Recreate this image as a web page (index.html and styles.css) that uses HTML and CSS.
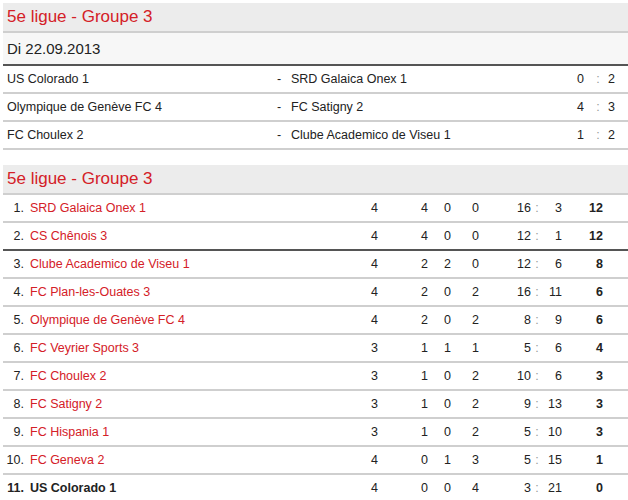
FILE: index.html
```html
<!DOCTYPE html>
<html lang="de">
<head>
    <meta charset="utf-8">
    <meta name="viewport" content="width=device-width">
    <title>5e ligue - Groupe 3</title>
    <link rel="stylesheet" href="styles.css">
</head>
<body>
    <div id="page">
        <div class="block">
            <h2 class="block-title">5e ligue - Groupe 3</h2>
            <div class="match-date">Di 22.09.2013</div>
            <div class="match">
                <span class="home">US Colorado 1</span>
                <span class="dash">-</span>
                <span class="away">SRD Galaica Onex 1</span>
                <span class="goals-home">0</span>
                <span class="colon">:</span>
                <span class="goals-away">2</span>
            </div>
            <div class="match">
                <span class="home">Olympique de Genève FC 4</span>
                <span class="dash">-</span>
                <span class="away">FC Satigny 2</span>
                <span class="goals-home">4</span>
                <span class="colon">:</span>
                <span class="goals-away">3</span>
            </div>
            <div class="match">
                <span class="home">FC Choulex 2</span>
                <span class="dash">-</span>
                <span class="away">Clube Academico de Viseu 1</span>
                <span class="goals-home">1</span>
                <span class="colon">:</span>
                <span class="goals-away">2</span>
            </div>
        </div>

        <div class="block">
            <h2 class="block-title">5e ligue - Groupe 3</h2>
            <table class="ranking">
                <colgroup>
                    <col class="c-rank">
                    <col class="c-team">
                    <col class="c-games">
                    <col class="c-won">
                    <col class="c-drawn">
                    <col class="c-lost">
                    <col class="c-gf">
                    <col class="c-colon">
                    <col class="c-ga">
                    <col class="c-pts">
                    <col class="c-rest">
                </colgroup>
                <tbody>
                    <tr><td class="rank">1.</td><td class="team"><a href="#">SRD Galaica Onex 1</a></td><td>4</td><td>4</td><td>0</td><td>0</td><td>16</td><td class="sep">:</td><td>3</td><td class="pts">12</td><td></td></tr>
                    <tr class="promo"><td class="rank">2.</td><td class="team"><a href="#">CS Chênois 3</a></td><td>4</td><td>4</td><td>0</td><td>0</td><td>12</td><td class="sep">:</td><td>1</td><td class="pts">12</td><td></td></tr>
                    <tr><td class="rank">3.</td><td class="team"><a href="#">Clube Academico de Viseu 1</a></td><td>4</td><td>2</td><td>2</td><td>0</td><td>12</td><td class="sep">:</td><td>6</td><td class="pts">8</td><td></td></tr>
                    <tr><td class="rank">4.</td><td class="team"><a href="#">FC Plan-les-Ouates 3</a></td><td>4</td><td>2</td><td>0</td><td>2</td><td>16</td><td class="sep">:</td><td>11</td><td class="pts">6</td><td></td></tr>
                    <tr><td class="rank">5.</td><td class="team"><a href="#">Olympique de Genève FC 4</a></td><td>4</td><td>2</td><td>0</td><td>2</td><td>8</td><td class="sep">:</td><td>9</td><td class="pts">6</td><td></td></tr>
                    <tr><td class="rank">6.</td><td class="team"><a href="#">FC Veyrier Sports 3</a></td><td>3</td><td>1</td><td>1</td><td>1</td><td>5</td><td class="sep">:</td><td>6</td><td class="pts">4</td><td></td></tr>
                    <tr><td class="rank">7.</td><td class="team"><a href="#">FC Choulex 2</a></td><td>3</td><td>1</td><td>0</td><td>2</td><td>10</td><td class="sep">:</td><td>6</td><td class="pts">3</td><td></td></tr>
                    <tr><td class="rank">8.</td><td class="team"><a href="#">FC Satigny 2</a></td><td>3</td><td>1</td><td>0</td><td>2</td><td>9</td><td class="sep">:</td><td>13</td><td class="pts">3</td><td></td></tr>
                    <tr><td class="rank">9.</td><td class="team"><a href="#">FC Hispania 1</a></td><td>3</td><td>1</td><td>0</td><td>2</td><td>5</td><td class="sep">:</td><td>10</td><td class="pts">3</td><td></td></tr>
                    <tr><td class="rank">10.</td><td class="team"><a href="#">FC Geneva 2</a></td><td>4</td><td>0</td><td>1</td><td>3</td><td>5</td><td class="sep">:</td><td>15</td><td class="pts">1</td><td></td></tr>
                    <tr class="own"><td class="rank">11.</td><td class="team">US Colorado 1</td><td>4</td><td>0</td><td>0</td><td>4</td><td>3</td><td class="sep">:</td><td>21</td><td class="pts">0</td><td></td></tr>
                </tbody>
            </table>
        </div>
    </div>
</body>
</html>
```

FILE: styles.css
```css
body {
    margin: 0;
    font-family: "Liberation Sans", Arial, sans-serif;
    font-size: 12.5px;
    color: #222;
    background: #fff;
}

#page {
    padding: 3px 0 0 3px;
}

.block {
    margin-bottom: 15px;
}

.block-title {
    margin: 0;
    height: 28px;
    line-height: 28px;
    padding-left: 4px;
    background-color: #ececec;
    border-bottom: 2px solid #cfcfcf;
    color: #d42027;
    font-size: 17px;
    font-weight: normal;
}

.match-date {
    height: 31px;
    line-height: 31px;
    padding-left: 4px;
    background-color: #f7f7f7;
    border-bottom: 2px solid #555;
    font-size: 15px;
}

.match {
    display: grid;
    grid-template-columns: 269px 14px 269px 35px 16px 1fr;
    height: 26px;
    line-height: 26px;
    border-bottom: 2px solid #cfcfcf;
}

.match .home {
    padding-left: 4px;
}

.match .dash {
    text-align: center;
}

.match .away {
    padding-left: 5px;
}

.match .goals-home {
    text-align: right;
    padding-right: 6px;
}

.match .colon {
    text-align: center;
    color: #999;
}

.match .goals-away {
    padding-left: 2px;
}

.ranking {
    width: 625px;
    border-collapse: collapse;
    table-layout: fixed;
}

.c-rank { width: 24px; }
.c-team { width: 313px; }
.c-games { width: 38px; }
.c-won { width: 50px; }
.c-drawn { width: 23px; }
.c-lost { width: 28px; }
.c-gf { width: 52px; }
.c-colon { width: 12px; }
.c-ga { width: 19px; }
.c-pts { width: 41px; }
.c-rest { width: 25px; }

.ranking td {
    height: 26px;
    padding: 0;
    text-align: right;
    border-bottom: 2px solid #cfcfcf;
    white-space: nowrap;
}

.ranking td.rank {
    padding-right: 3px;
}

.ranking td.team {
    text-align: left;
    padding-left: 3px;
}

.ranking td.sep {
    text-align: center;
    color: #999;
}

.ranking td.pts {
    font-weight: bold;
}

.ranking a {
    color: #d42027;
    text-decoration: none;
}

.ranking tr.promo td {
    border-bottom-color: #555;
}

.ranking tr.own .rank,
.ranking tr.own .team {
    font-weight: bold;
}
```
